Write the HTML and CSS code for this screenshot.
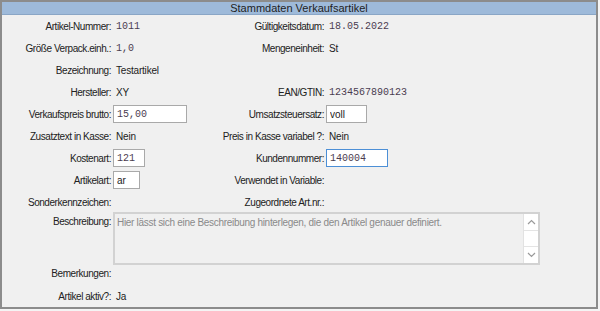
FILE: index.html
```html
<!DOCTYPE html>
<html lang="de">
<head>
  <meta charset="UTF-8" />
  <meta name="viewport" content="width=device-width, initial-scale=1.0"/>
  <title>Stammdaten Verkaufsartikel</title>
  <link rel="stylesheet" href="styles.css">
</head>
<body>

  <div class="window">
    <div class="title">Stammdaten Verkaufsartikel</div>

    <div class="form">
      <div class="label">Artikel-Nummer:</div>
      <div class="value mono">1011</div>
      <div class="label">Gültigkeitsdatum:</div>
      <div class="value mono">18.05.2022</div>

      <div class="label">Größe Verpack.einh.:</div>
      <div class="value mono">1,0</div>
      <div class="label">Mengeneinheit:</div>
      <div class="value">St</div>

      <div class="label">Bezeichnung:</div>
      <div class="value">Testartikel</div>
      <div class="label"></div>
      <div class="value"></div>

      <div class="label">Hersteller:</div>
      <div class="value">XY</div>
      <div class="label">EAN/GTIN:</div>
      <div class="value mono">1234567890123</div>

      <div class="label">Verkaufspreis brutto:</div>
      <div class="value"><input class="field mono w-price" type="text" value="15,00"></div>
      <div class="label">Umsatzsteuersatz:</div>
      <div class="value"><input class="field w-tax" type="text" value="voll"></div>

      <div class="label">Zusatztext in Kasse:</div>
      <div class="value">Nein</div>
      <div class="label">Preis in Kasse variabel ?:</div>
      <div class="value">Nein</div>

      <div class="label">Kostenart:</div>
      <div class="value"><input class="field mono w-cost" type="text" value="121"></div>
      <div class="label">Kundennummer:</div>
      <div class="value"><input class="field mono w-cust focused" type="text" value="140004"></div>

      <div class="label">Artikelart:</div>
      <div class="value"><input class="field w-kind" type="text" value="ar"></div>
      <div class="label">Verwendet in Variable:</div>
      <div class="value"></div>

      <div class="label">Sonderkennzeichen:</div>
      <div class="value"></div>
      <div class="label">Zugeordnete Art.nr.:</div>
      <div class="value"></div>

      <div class="label top">Beschreibung:</div>
      <div class="memo">
        <div class="memo-text">Hier lässt sich eine Beschreibung hinterlegen, die den Artikel genauer definiert.</div>
        <div class="scrollbar">
          <div class="arrow">
            <svg width="9" height="6" viewBox="0 0 9 6"><path d="M1 5 L4.5 1.5 L8 5" fill="none" stroke="#9a9a9a" stroke-width="1.2"/></svg>
          </div>
          <div class="track"></div>
          <div class="arrow">
            <svg width="9" height="6" viewBox="0 0 9 6"><path d="M1 1 L4.5 4.5 L8 1" fill="none" stroke="#9a9a9a" stroke-width="1.2"/></svg>
          </div>
        </div>
      </div>

      <div class="label">Bemerkungen:</div>
      <div class="value wide"></div>

      <div class="label">Artikel aktiv?:</div>
      <div class="value wide">Ja</div>
    </div>
  </div>

</body>
</html>
```

FILE: styles.css
```css
* {
  margin: 0;
  padding: 0;
  box-sizing: border-box;
}

body {
  background: #f4f4f4;
  font-family: "Liberation Sans", Arial, sans-serif;
  font-size: 10px;
  color: #222;
}

.window {
  width: 598px;
  height: 309px;
  border: 2px solid #8c8c8c;
  background: #f0f0f0;
}

.title {
  height: 13px;
  line-height: 13px;
  background: #9ebada;
  border-bottom: 1px solid #8aa6c6;
  text-align: center;
  font-size: 11px;
  color: #1e1e1e;
}

.form {
  display: grid;
  grid-template-columns: 109px 100px 109px 1fr;
  grid-template-rows: repeat(9, 22px) 52px 17px 28px;
  column-gap: 2px;
}

.label {
  display: flex;
  align-items: center;
  justify-content: flex-end;
  letter-spacing: -0.45px;
  white-space: nowrap;
}

.label.top {
  align-items: flex-start;
  padding-top: 3px;
}

.value {
  display: flex;
  align-items: center;
  padding-left: 3px;
  letter-spacing: -0.2px;
  white-space: nowrap;
}

.value.wide {
  grid-column: 2 / 5;
}

.value:has(.field) {
  padding-left: 0;
}

.mono {
  font-family: "Liberation Mono", "Courier New", monospace;
  font-size: 10px;
  letter-spacing: 0;
  color: #4b3d50;
}

.field {
  height: 18px;
  border: 1px solid #a9a9a9;
  background: #fff;
  padding: 0 3px;
  font-size: 10px;
  outline: none;
}

.field:not(.mono) {
  font-family: "Liberation Sans", Arial, sans-serif;
  color: #222;
}

.field.focused {
  border-color: #4c8fd6;
}

.w-price { width: 74px; }
.w-tax { width: 41px; }
.w-cost { width: 32px; }
.w-kind { width: 27px; }
.w-cust { width: 62px; }

.memo {
  grid-column: 2 / 5;
  width: 427px;
  height: 53px;
  margin-top: -1px;
  border: 2px solid #d2d2d2;
  display: flex;
}

.memo-text {
  flex: 1;
  padding: 3px 2px;
  color: #8a8a8a;
  letter-spacing: -0.3px;
}

.scrollbar {
  width: 15px;
  display: flex;
  flex-direction: column;
  border-left: 1px solid #e2e2e2;
  background: #fff;
}

.arrow {
  height: 16px;
  display: flex;
  align-items: center;
  justify-content: center;
  background: #fff;
}

.track {
  flex: 1;
  border-top: 1px solid #e4e4e4;
  border-bottom: 1px solid #e4e4e4;
  background: #fff;
}
```
